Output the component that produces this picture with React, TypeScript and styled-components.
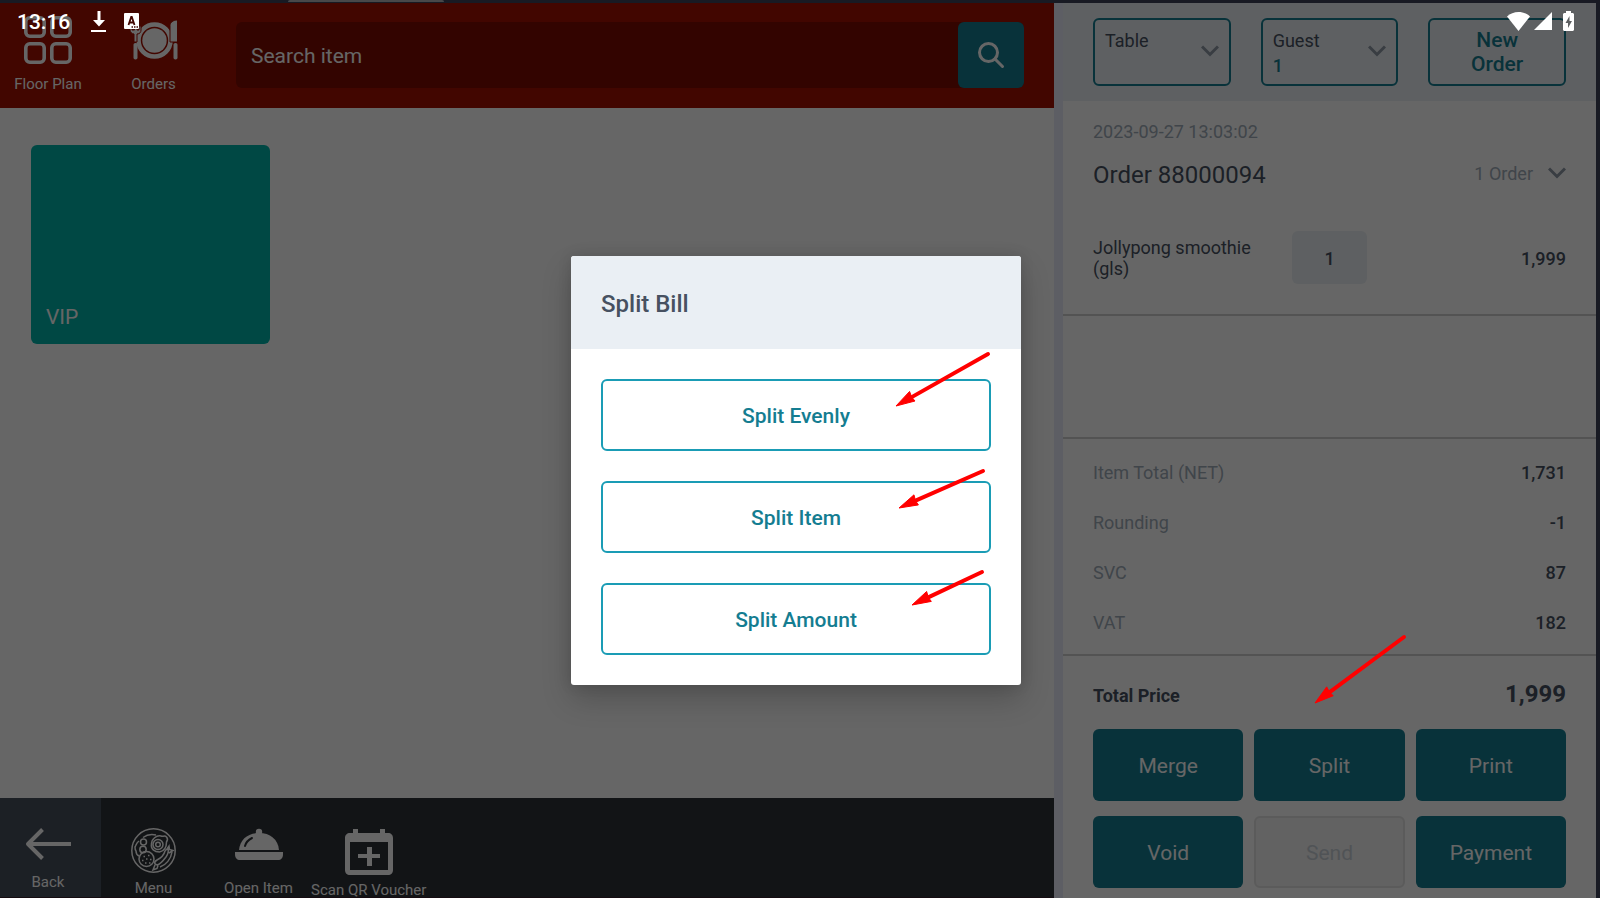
import React from "react";
import styled, { createGlobalStyle } from "styled-components";

const c = {
  teal: "#147d91",
  tealLine: "#1a9cb5",
  ink: "#475161",
  muted: "#a0acb9",
  pale: "#ebf0f4",
  rule: "#cfcfcf",
  red: "#ff0000",
};

const GlobalStyle = createGlobalStyle`
  *, *::before, *::after { box-sizing: border-box; }
  body { margin: 0; background: #3c4358; }
  body, button, input, select {
    font-family: Roboto, "Liberation Sans", sans-serif;
    color: ${c.ink};
  }
  button { cursor: pointer; }
  svg { display: block; flex: none; }
`;

const Screen = styled.div`
  position: relative;
  min-height: 100vh;
  padding: 3px 4px 0 0;
  display: grid;
  grid-template-columns: minmax(0, 1fr) 542px;
  background: #3c4358;
  overflow: hidden;
`;

const TabEdge = styled.div`
  position: absolute;
  top: 0;
  left: 288px;
  width: 156px;
  height: 2px;
  border-radius: 2px 2px 0 0;
  background: #b4b4ba;
`;

const Catalog = styled.main`
  display: flex;
  flex-direction: column;
  background: #fff;
`;

const TopBar = styled.header`
  display: flex;
  height: 105px;
  background: #a50f00;
`;

const NavItem = styled.button<{ $lead?: boolean; $tint?: boolean; $top: number }>`
  display: flex;
  flex-direction: column;
  align-items: center;
  gap: 7px;
  flex: none;
  min-width: ${(p) => (p.$lead ? 101 : 105)}px;
  padding: ${(p) => p.$top}px ${(p) => (p.$lead ? 5 : 0)}px 0 0;
  border: 0;
  background: ${(p) => (p.$tint ? "#47505c" : "transparent")};
  color: #fff;
  font-size: 15px;
  line-height: 16px;
  white-space: nowrap;
`;

const SearchForm = styled.form`
  flex: 1;
  display: flex;
  height: 66px;
  margin: 19px 30px 0;
  border-radius: 6px;
  background: #7f0c00;
`;

const SearchInput = styled.input`
  flex: 1;
  min-width: 0;
  padding: 2px 15px 0;
  border: 0;
  background: transparent;
  color: #fff;
  font-size: 21px;
  &::placeholder { color: #fff; opacity: 1; }
`;

const SearchButton = styled.button`
  display: grid;
  place-items: center;
  width: 66px;
  padding: 0;
  border: 0;
  border-radius: 6px;
  background: ${c.teal};
`;

const Tiles = styled.section`
  flex: 1;
  display: flex;
  flex-wrap: wrap;
  align-content: flex-start;
  gap: 30px;
  padding: 37px 31px;
`;

const Tile = styled.button`
  display: flex;
  align-items: flex-end;
  width: 239px;
  height: 199px;
  padding: 15px;
  border: 0;
  border-radius: 6px;
  background: #00b4aa;
  color: #fff;
  font-size: 21px;
  line-height: 24px;
`;

const BottomBar = styled.nav`
  display: flex;
  height: 100px;
  background: #2f3338;
  border-bottom: 1px solid #35202c;
`;

const Order = styled.aside`
  display: flex;
  flex-direction: column;
  border-left: 9px solid #e9ebfb;
  background: #fff;
`;

const OrderHead = styled.div`
  display: grid;
  grid-template-columns: repeat(3, 1fr);
  gap: 30px;
  height: 98px;
  padding: 15px 30px;
  background: ${c.pale};
`;

const Field = styled.div`
  position: relative;
  padding: 9px 10px 7px;
  border: 2px solid ${c.teal};
  border-radius: 6px;
  font-size: 18px;
  line-height: 24px;
`;

const FieldLabel = styled.label`
  display: block;
`;

const FieldSelect = styled.select`
  display: block;
  appearance: none;
  width: 100%;
  height: 24px;
  padding: 0;
  border: 0;
  background: transparent;
  color: ${c.teal};
  font-size: 18px;
  font-weight: 500;
`;

const FieldArrow = styled.span`
  position: absolute;
  top: 25px;
  right: 10px;
  pointer-events: none;
`;

const OutlineButton = styled.button<{ $line: string }>`
  position: relative;
  width: 100%;
  min-height: 68px;
  padding: 0 24px;
  border: 2px solid ${(p) => p.$line};
  border-radius: 6px;
  background: transparent;
  color: ${c.teal};
  font-size: 21px;
  font-weight: 500;
  line-height: 24px;
`;

const Details = styled.section`
  padding: 19px 30px 30px;
  border-bottom: 2px solid ${c.rule};
`;

const Stamp = styled.time`
  display: block;
  color: ${c.muted};
  font-size: 18px;
  line-height: 24px;
`;

const Row = styled.div`
  position: relative;
  display: flex;
  align-items: center;
  justify-content: space-between;
`;

const OrderRow = styled(Row)`
  height: 61px;
`;

const OrderTitle = styled.h1`
  margin: 0;
  font-size: 24px;
  font-weight: 400;
  line-height: 30px;
`;

const OrderToggle = styled.button`
  display: flex;
  align-items: center;
  gap: 15px;
  padding: 0 0 3px;
  border: 0;
  background: transparent;
  color: ${c.muted};
  font-size: 18px;
`;

const ItemRow = styled.div`
  display: grid;
  grid-template-columns: 199px 75px 1fr;
  align-items: center;
  margin-top: 26px;
  font-size: 18px;
  line-height: 21px;
`;

const ItemName = styled.span`
  padding-right: 30px;
`;

const Quantity = styled.input`
  width: 75px;
  height: 53px;
  padding: 2px 0 0;
  border: 0;
  border-radius: 6px;
  background: ${c.pale};
  font-size: 18px;
  font-weight: 500;
  text-align: center;
`;

const Price = styled.span`
  padding-top: 1px;
  font-weight: 500;
  text-align: right;
`;

const EmptySpace = styled.div`
  flex: 1;
`;

const Totals = styled.table`
  width: 100%;
  border-top: 2px solid ${c.rule};
  border-bottom: 2px solid ${c.rule};
  border-spacing: 0;
  padding: 8px 30px 7px;
  font-size: 18px;
  th, td { height: 50px; padding: 0; }
  th { color: ${c.muted}; font-weight: 400; text-align: left; }
  td { font-weight: 500; text-align: right; }
`;

const Checkout = styled.section`
  padding: 20px 30px 10px;
`;

const TotalRow = styled(Row)`
  align-items: baseline;
  height: 53px;
  font-size: 18px;
  font-weight: 700;
  line-height: 36px;
`;

const TotalValue = styled.span`
  font-size: 24px;
`;

const Actions = styled.div`
  display: grid;
  grid-template-columns: repeat(3, 1fr);
  gap: 15px 11px;
`;

const Action = styled.button`
  height: 72px;
  padding: 2px 0 0;
  border: 0;
  border-radius: 6px;
  background: ${c.teal};
  color: #fff;
  font-size: 21px;
  &:disabled {
    border: 2px solid #e3e3e3;
    background: #f5f5f5;
    color: #c9d0d8;
    cursor: default;
  }
`;

const Scrim = styled.div`
  position: absolute;
  inset: 0;
  display: grid;
  place-items: center;
  padding: 43px 8px 0 0;
  background: rgba(0, 0, 0, 0.6);
`;

const Dialog = styled.div`
  width: 450px;
  border-radius: 3px;
  background: #fff;
  box-shadow: 0 14px 30px rgba(0, 0, 0, 0.2), 0 0 14px rgba(0, 0, 0, 0.12);
`;

const DialogTitle = styled.h2`
  margin: 0;
  padding: 33px 30px 30px;
  border-radius: 3px 3px 0 0;
  background: #eaeff4;
  font-size: 24px;
  font-weight: 500;
  line-height: 30px;
`;

const DialogBody = styled.div`
  display: grid;
  gap: 30px;
  padding: 30px;
`;

const SplitButton = styled(OutlineButton)`
  height: 72px;
  padding: 2px 24px 0;
`;

const Pointer = styled.svg<{ $left: number; $top: number }>`
  position: absolute;
  left: ${(p) => p.$left}px;
  top: ${(p) => p.$top}px;
  overflow: visible;
  pointer-events: none;
`;

/* The hint that points at the order's split action, above the scrim. */
const SplitHint = styled.div`
  position: absolute;
  right: 196px;
  bottom: 195px;
  width: 89px;
  height: 66px;
  pointer-events: none;
`;

const StatusBar = styled.div`
  position: absolute;
  inset: 0 0 auto 0;
  display: flex;
  align-items: center;
  height: 42px;
  padding: 0 26px 0 17px;
  color: #fff;
  pointer-events: none;
`;

const Clock = styled.span`
  width: 74px;
  padding-top: 2px;
  font-size: 21px;
  font-weight: 500;
`;

const StatusIcons = styled.div`
  display: flex;
  align-items: center;
  gap: 17px;
`;

const SignalIcons = styled.div`
  display: flex;
  align-items: center;
  gap: 4px;
  margin-left: auto;
`;

const Battery = styled.svg`
  margin-left: 7px;
`;

/* Red pointer: a line that ends in a filled head, whose tip is the box's bottom left corner. */
function Arrow(p: { left: number; top: number; w: number; h: number }) {
  const len = Math.hypot(p.w, p.h);
  const ux = p.w / len;
  const uy = -p.h / len;
  const bx = ux * 19;
  const by = p.h + uy * 19;
  const head = [
    [0, p.h],
    [bx - uy * 5, by + ux * 5],
    [ux * 18, p.h + uy * 18],
    [bx + uy * 6, by - ux * 6],
  ];
  return (
    <Pointer $left={p.left} $top={p.top} width={p.w} height={p.h} aria-hidden="true">
      <line x1={p.w} y1={0} x2={ux * 15} y2={p.h + uy * 15} stroke={c.red} strokeWidth={4} strokeLinecap="round" />
      <polygon points={head.map((q) => q.join(",")).join(" ")} fill={c.red} stroke={c.red} strokeWidth={1} />
    </Pointer>
  );
}

const Chevron = () => (
  <svg width="18" height="12" viewBox="0 0 18 12" fill="none" stroke="#8e99a6" strokeWidth="3">
    <path d="M1 1.5 9 9.5 17 1.5" />
  </svg>
);

const FloorIcon = () => (
  <svg width="48" height="53" viewBox="0 0 48 53" fill="none" stroke="#fff" strokeWidth="3.6">
    <rect x="1.8" y="1.8" width="18.4" height="18.4" rx="4" />
    <rect x="27.8" y="1.8" width="18.4" height="18.4" rx="4" />
    <rect x="1.8" y="27.8" width="18.4" height="18.4" rx="4" />
    <rect x="27.8" y="27.8" width="18.4" height="18.4" rx="4" />
  </svg>
);

const PlateIcon = () => (
  <svg width="48" height="53" viewBox="0 0 48 53" fill="#fff">
    <circle cx="24.5" cy="24.5" r="12.2" />
    <circle cx="24.5" cy="24.5" r="16" fill="none" stroke="#fff" strokeWidth="4.6" />
    <path d="M40 26V9.500c0-3 3-5.500 7.500-5.500v22z" stroke="#a50f00" strokeWidth="1" />
    <rect x="43.500" y="27" width="4" height="16.500" rx="1.800" />
    <path d="M0 10v4c0 2 2 4 4 4v8h3v-8c3 0 4-2 4-4v-4H9v4H7v-4H4.500v4H2v-4z" stroke="#a50f00" strokeWidth="1" />
    <rect x="3.500" y="27" width="4" height="16.500" rx="1.800" />
  </svg>
);

const SearchIcon = () => (
  <svg width="28" height="28" viewBox="0 0 28 28" fill="none" stroke="#fff" strokeWidth="3" strokeLinecap="round">
    <circle cx="11.500" cy="11.500" r="9" />
    <path d="m18 18 7.500 7.500" />
  </svg>
);

const BackIcon = () => (
  <svg width="46" height="39" viewBox="0 0 46 39" fill="none" stroke="#fff" strokeWidth="4">
    <path d="M46 16H4" />
    <path d="M17.500 1.500 3 16l14.500 14.500" strokeLinejoin="round" />
  </svg>
);

const MealIcon = () => (
  <svg width="45" height="45" viewBox="0 0 45 45" fill="none" stroke="#fff" strokeWidth="1.500">
    <circle cx="22.500" cy="22.500" r="21.700" />
    <path d="M12 9.500C16 6.500 21 6 25 7M8 13c-3 2-2.500 4-4 6 0 3 0 3 1 4 0 3 1 4 3 5M41 24c-1 7-6 13-12 15" />
    <circle cx="12.500" cy="14" r="3" />
    <circle cx="12" cy="21.500" r="3.200" />
    <path d="M30 8c2 1 3.500-1 5.500 1s1 3.500 0 5c0 6-2 9-7 10-5 0-9-3-8-8 0-5 5-9 9.500-8z" />
    <circle cx="27" cy="16.500" r="5" />
    <circle cx="27" cy="16.500" r="2.300" />
    <circle cx="15.500" cy="31" r="7.500" />
    <path d="M12.500 28.500h1.500M17 27.500h1.500M15 31h1.500M19 31.500h1.500M11 32.500h1.500M14 35h1.500M18 35h1.500" />
    <path d="M37 21c1 3 0 5-2 8-3 4-5 7-9 8l-2-1c-1-2 0-3 2-4 4-2 7-5 8-9 1-2 2-2 3-2zM36 21l2-3 .500 3.500 3.500 1-4 2.500M24 37l-2 5 4-1.500 1-3" />
  </svg>
);

const ClocheIcon = () => (
  <svg width="48" height="45" viewBox="0 0 48 45" fill="#fff">
    <circle cx="24" cy="4" r="3.200" />
    <path d="M4 22C5 11 13 5 24 5s19 6 20 17z" />
    <path d="M0 24h48v2c0 4-2 6-5 6H5c-3 0-5-2-5-6z" />
    <path d="M10 18c1-4 3-6 7-8" fill="none" stroke="#2f3338" strokeWidth="2" strokeLinecap="round" />
  </svg>
);

const VoucherIcon = () => (
  <svg width="48" height="47" viewBox="0 0 48 47" fill="#fff">
    <path
      fillRule="evenodd"
      d="M8 1h5v4h22V1h5v4h3c3 0 5 2 5 5v32c0 3-2 5-5 5H5c-3 0-5-2-5-5V10c0-3 2-5 5-5h3zM5 14v28h38V14z"
    />
    <path d="M22 19h5v7h8v4h-8v8h-5v-8h-9v-4h9z" />
  </svg>
);

const navTop = [
  { label: "Floor Plan", icon: <FloorIcon /> },
  { label: "Orders", icon: <PlateIcon /> },
];

const navBottom = [
  { label: "Back", icon: <BackIcon /> },
  { label: "Menu", icon: <MealIcon /> },
  { label: "Open Item", icon: <ClocheIcon /> },
  { label: "Scan QR Voucher", icon: <VoucherIcon /> },
];

const totals = [
  ["Item Total (NET)", "1,731"],
  ["Rounding", "-1"],
  ["SVC", "87"],
  ["VAT", "182"],
];

const actions = ["Merge", "Split", "Print", "Void", "Send", "Payment"];

const splits = [
  { label: "Split Evenly", arrow: { left: 293, top: -27, w: 92, h: 52 } },
  { label: "Split Item", arrow: { left: 296, top: -12, w: 84, h: 37 } },
  { label: "Split Amount", arrow: { left: 309, top: -13, w: 70, h: 33 } },
];

export default function App() {
  return (
    <Screen>
      <GlobalStyle />
      <TabEdge />
      <Catalog>
        <TopBar>
          {navTop.map((n, i) => (
            <NavItem key={n.label} type="button" $top={13} $lead={i === 0}>
              {n.icon}
              {n.label}
            </NavItem>
          ))}
          <SearchForm role="search" onSubmit={(e) => e.preventDefault()}>
            <SearchInput aria-label="Search item" placeholder="Search item" />
            <SearchButton type="submit" aria-label="Search">
              <SearchIcon />
            </SearchButton>
          </SearchForm>
        </TopBar>
        <Tiles>
          <Tile type="button">VIP</Tile>
        </Tiles>
        <BottomBar>
          {navBottom.map((n, i) => (
            <NavItem key={n.label} type="button" $top={30} $lead={i === 0} $tint={i === 0}>
              {n.icon}
              {n.label}
            </NavItem>
          ))}
        </BottomBar>
      </Catalog>

      <Order>
        <OrderHead>
          <Field>
            <FieldLabel htmlFor="table">Table</FieldLabel>
            <FieldSelect id="table" />
            <FieldArrow>
              <Chevron />
            </FieldArrow>
          </Field>
          <Field>
            <FieldLabel htmlFor="guest">Guest</FieldLabel>
            <FieldSelect id="guest">
              <option>1</option>
            </FieldSelect>
            <FieldArrow>
              <Chevron />
            </FieldArrow>
          </Field>
          <OutlineButton type="button" $line={c.teal}>
            New Order
          </OutlineButton>
        </OrderHead>

        <Details>
          <Stamp>2023-09-27 13:03:02</Stamp>
          <OrderRow>
            <OrderTitle>Order 88000094</OrderTitle>
            <OrderToggle type="button">
              1 Order <Chevron />
            </OrderToggle>
          </OrderRow>
          <ItemRow>
            <ItemName>Jollypong smoothie (gls)</ItemName>
            <Quantity aria-label="Quantity" defaultValue="1" />
            <Price>1,999</Price>
          </ItemRow>
        </Details>

        <EmptySpace />

        <Totals>
          <tbody>
            {totals.map(([name, value]) => (
              <tr key={name}>
                <th scope="row">{name}</th>
                <td>{value}</td>
              </tr>
            ))}
          </tbody>
        </Totals>

        <Checkout>
          <TotalRow>
            <span>Total Price</span>
            <TotalValue>1,999</TotalValue>
          </TotalRow>
          <Actions>
            {actions.map((a) => (
              <Action key={a} type="button" disabled={a === "Send"}>
                {a}
              </Action>
            ))}
          </Actions>
        </Checkout>
      </Order>

      <Scrim>
        <Dialog role="dialog" aria-labelledby="split-title">
          <DialogTitle id="split-title">Split Bill</DialogTitle>
          <DialogBody>
            {splits.map((s) => (
              <SplitButton key={s.label} type="button" $line={c.tealLine}>
                {s.label}
                <Arrow {...s.arrow} />
              </SplitButton>
            ))}
          </DialogBody>
        </Dialog>
      </Scrim>

      <SplitHint>
        <Arrow left={0} top={0} w={89} h={66} />
      </SplitHint>

      <StatusBar>
        <Clock>13:16</Clock>
        <StatusIcons>
          <svg width="16" height="22" viewBox="0 0 16 22" fill="#fff">
            <path d="M6.500 1h3v9H14l-6 6.500L2 10h4.500zM0 20h15v2H0z" />
          </svg>
          <svg width="15" height="16" viewBox="0 0 15 16">
            <rect width="15" height="16" rx="1" fill="#fff" />
            <path d="M4.500 12 7.200 4h.600l2.700 8M5.500 9.500h4" fill="none" stroke="#420600" strokeWidth="1.800" />
            <path d="M7.500 14h1.500M10 14h1.500M12.500 14h1.500" stroke="#420600" strokeWidth="1.300" />
          </svg>
        </StatusIcons>
        <SignalIcons>
          <svg width="23" height="19" viewBox="0 0 23 19" fill="#fff">
            <path d="M11.500 19 0 4.500C6-1.500 17-1.500 23 4.500z" />
          </svg>
          <svg width="18" height="18" viewBox="0 0 18 18" fill="#fff">
            <path d="M18 0v18H0z" />
          </svg>
          <Battery width="11" height="20" viewBox="0 0 11 20" fill="#fff">
            <path d="M3 0h5v2h2l1 1v16l-1 1H1l-1-1V3l1-1h2z" />
            <path d="M6.500 5 2.500 12H5v5l4-7H6.500z" fill="#5e6062" />
          </Battery>
        </SignalIcons>
      </StatusBar>
    </Screen>
  );
}
